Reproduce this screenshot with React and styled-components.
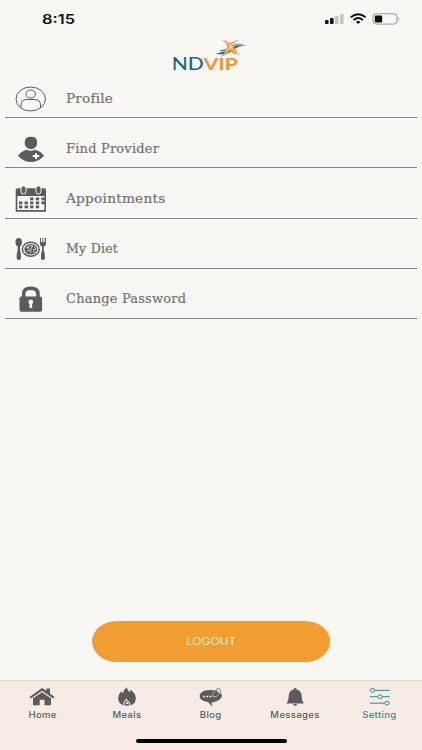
import React from 'react';
import styled, { createGlobalStyle } from 'styled-components';

const GlobalStyle = createGlobalStyle`
  :root {
    --paper: #f9f7f3;
    --blush: #f7ece5;
    --iconGray: #5b5b5b;
    --textGray: #727272;
    --teal: #2c8c94;
    --orange: #f19d31;
  }

  * {
    box-sizing: border-box;
  }

  body {
    margin: 0;
    background: var(--paper);
    font-family: Inter, 'Liberation Sans', sans-serif;
  }
`;

const Screen = styled.div`
  display: flex;
  flex-direction: column;
  height: 750px;
  width: 422px;
  background: var(--paper);
  overflow: hidden;
`;

const StatusBar = styled.div`
  display: flex;
  justify-content: space-between;
  align-items: center;
  height: 38px;
  padding: 0 21px 0 42px;
`;

const Time = styled.span`
  font-size: 13px;
  font-weight: 600;
  line-height: 16px;
  color: #111;
  transform: scaleX(1.26);
  transform-origin: left;
`;

const Header = styled.header`
  display: flex;
  justify-content: center;
  height: 42px;
`;

const Menu = styled.ul`
  flex: 1;
  list-style: none;
  margin: 0;
  padding: 0 5px;
`;

const MenuItem = styled.li`
  display: flex;
  align-items: center;
  height: 50.25px;
  padding: 12px 0 0 10px;
  border-bottom: 1px solid #888;

  &:first-child {
    height: 38px;
    padding-top: 0;
  }
`;

const MenuIcon = styled.svg`
  width: 32px;
  height: 28px;
  margin-right: 19px;
  color: var(--iconGray);
`;

const MenuLabel = styled.span`
  font-family: 'DejaVu Serif', serif;
  font-size: 12px;
  line-height: 16px;
  letter-spacing: 0.2px;
  color: var(--textGray);
  -webkit-text-stroke: 0.2px var(--textGray);
  transform: scaleX(${(props) => props.$stretch});
  transform-origin: left;
`;

const LogoutButton = styled.button`
  align-self: center;
  width: 238px;
  height: 41px;
  margin-bottom: 18px;
  border: 0;
  border-radius: 25px / 20.5px;
  background: var(--orange);
  color: #fff3d8;
  font-family: Inter, sans-serif;
  font-size: 10.5px;
  padding: 0;
`;

const ButtonText = styled.span`
  display: inline-block;
  transform: scaleX(1.14);
`;

const Footer = styled.footer`
  height: 70px;
  background: var(--blush);
  border-top: 1px solid #d9d7d5;
`;

const Tabs = styled.nav`
  display: grid;
  grid-template-columns: repeat(5, 1fr);
  height: 58px;
`;

const Tab = styled.div`
  display: flex;
  flex-direction: column;
  align-items: center;
  padding-top: 6px;
  color: ${(props) => (props.$active ? 'var(--teal)' : 'var(--iconGray)')};
`;

const TabIcon = styled.svg`
  width: 26px;
  height: 20px;
`;

const TabLabel = styled.span`
  font-size: 8.5px;
  font-weight: 500;
  line-height: 12px;
  margin-top: 2px;
  letter-spacing: 0.3px;
  transform: scaleX(1.12);
`;

const HomeIndicator = styled.div`
  width: 151px;
  height: 4px;
  margin: 0 auto;
  border-radius: 2px;
  background: #000;
`;

function StatusIcons() {
  return (
    <svg width='77' height='14' viewBox='0 0 77 14'>
      <g fill='#111'>
        <rect x='1' y='8' width='3.6' height='4' rx='1' />
        <rect x='6' y='6' width='3.6' height='6' rx='1' />
        <rect x='11' y='4' width='3.6' height='8' rx='1' opacity='.22' />
        <rect x='16' y='2' width='3.6' height='10' rx='1' opacity='.22' />
        <path d='M31.8 9.8Q34.2 8 36.6 9.8L34.2 12Z' />
      </g>
      <g fill='none' stroke='#111' strokeWidth='1.9'>
        <path d='M26.8 5.2Q34.2-.9 41.6 5.2' />
        <path d='M29.5 7.9Q34.2 4 38.9 7.9' />
      </g>
      <rect x='49' y='1.8' width='24' height='10.3' rx='3' fill='none' stroke='#999' />
      <rect x='50.8' y='3.5' width='7.4' height='6.9' rx='1.2' fill='#111' />
      <path d='M74.5 5Q76.4 7 74.5 9Z' fill='#999' />
    </svg>
  );
}

function Logo() {
  return (
    <svg width='86' height='42' viewBox='168 38 86 42'>
      <g fontFamily='Lato, sans-serif' fontSize='17.5'>
        <text x='171.8' y='69.8' fontWeight='500' fill='#196a80' textLength='32' lengthAdjust='spacingAndGlyphs'>ND</text>
        <text x='203.4' y='69.8' fontWeight='700' fill='#ee9634' textLength='34.5' lengthAdjust='spacingAndGlyphs'>VIP</text>
      </g>
      <g fill='#196a80'>
        <path d='M216 53.8Q222 52.5 226 49Q234 42.5 247 45.2Q239 45.5 234 49.5Q226 56 216 53.8Z' />
        <path d='M219 50.5Q227 50 231 46.5Q236 42.5 244 44.5Q237 45 232 49Q226 53 219 50.5Z' />
      </g>
      <g fill='#ee9634'>
        <path d='M222 40Q232 42 234.5 48Q236.5 53 241 54.5Q232 55 228.8 49.2Q227 44 222 40Z' />
        <path d='M239.5 39.7Q232.5 43 231.5 48.5Q229 54 220.5 57Q225 52.5 226.8 48Q230 41 239.5 39.7Z' />
      </g>
      <g fill='none' stroke='#f9f7f3' strokeWidth='.8'>
        <path d='M218 52.3Q226 51.8 231.5 47.3Q237 43.6 245 45.3' />
        <path d='M225 42Q231 44.5 232.3 49Q234 53 239 54.2' />
        <path d='M236 41.7Q230 44.5 229 49' />
      </g>
    </svg>
  );
}

function ProfileIcon() {
  return (
    <MenuIcon viewBox='0 0 32 28' fill='none' stroke='currentColor' strokeWidth='1'>
      <ellipse cx='15.7' cy='14' rx='14.7' ry='12' />
      <ellipse cx='15.7' cy='9' rx='4.7' ry='4' />
      <path d='M6 22.8V20Q6 14.5 12 14.5H19.5Q25.5 14.5 25.5 20V22.8' />
    </MenuIcon>
  );
}

function ProviderIcon() {
  return (
    <MenuIcon viewBox='0 0 32 28' fill='currentColor'>
      <path d='M9.8 7Q9.8 1.8 16 1.8T22 7V9Q21 14 16 14T9.8 9Z' />
      <path d='M3 21Q6 16 11.5 14.7Q16 17 20 14.7Q26 16 29 21Q23 27 16 27T3 21Z' />
      <path d='M21 18.2V24M17.7 21.1H24.3' stroke='#f9f7f3' strokeWidth='2' />
    </MenuIcon>
  );
}

function CalendarIcon() {
  const dots = [[15.7, 13], [21.4, 13], [27, 13], [4.6, 17], [10.2, 17], [15.7, 17], [21.4, 17], [27, 17], [4.6, 21], [10.2, 21], [15.7, 21], [21.4, 21]];
  return (
    <MenuIcon viewBox='0 0 32 28'>
      <path d='M2.5 3.3H29.5Q31 3.3 31 5V26.7H.7V5Q.7 3.3 2.5 3.3Z' fill='currentColor' />
      <path d='M2.3 11H29.4V25H2.3Z' fill='#f9f7f3' />
      <g fill='currentColor' stroke='#f9f7f3'>
        <rect x='6' y='.9' width='5' height='8' rx='2.2' />
        <rect x='21' y='.9' width='5' height='8' rx='2.2' />
      </g>
      {dots.map(([x, y]) => (
        <rect key={`${x}-${y}`} x={x - 0.6} y={y - 0.5} width='3.3' height='2.8' fill='currentColor' />
      ))}
    </MenuIcon>
  );
}

function DietIcon() {
  return (
    <MenuIcon viewBox='0 0 32 28' fill='currentColor'>
      <ellipse cx='3.7' cy='7.3' rx='3.2' ry='4.2' />
      <path d='M2.9 10H4.8L5.2 16Q6.2 18 5.8 24Q3.8 26 1.8 24Q1.4 18 2.5 16Z' />
      <path d='M25 3H26V7.2H27.4V3H28.4V7.2H29.8V3H31V9Q30.8 11 28.8 11.5V15.5Q30.2 18 29.8 24Q27.9 26 26 24Q25.8 18 27 15.5V11.5Q25 11 25 9Z' />
      <ellipse cx='15.8' cy='14.2' rx='8.4' ry='7' fill='none' stroke='currentColor' strokeWidth='1.5' />
      <ellipse cx='15.8' cy='14.2' rx='6.4' ry='5.2' />
      <path d='M11 13L14 11L13 14M15 10.5L18 11L16 13M19 12L21 14L18 15M12 16L15 15L16 18M18 17H20M15 13L17 15' fill='none' stroke='#f9f7f3' strokeWidth='.8' />
    </MenuIcon>
  );
}

function LockIcon() {
  return (
    <MenuIcon viewBox='0 0 32 28'>
      <path d='M8.7 13V9Q8.7 3.3 15.8 3.3T23 9V13' fill='none' stroke='currentColor' strokeWidth='3.5' />
      <rect x='4.5' y='11.5' width='22.6' height='15.2' rx='1.8' fill='currentColor' />
      <circle cx='15.8' cy='17' r='2.4' fill='#f9f7f3' />
      <path d='M14.8 17H16.9L17.3 23H14.4Z' fill='#f9f7f3' />
    </MenuIcon>
  );
}

function HomeIcon() {
  return (
    <TabIcon viewBox='0 0 26 20' fill='currentColor'>
      <path d='M13 1L17.3 3.8V1.5H21V6.4L25.5 10L24.2 11.5L13 3.8L1.8 11.5L.5 10Z' />
      <path d='M13 5.2L22 11.2V18.2H15.5V12.8H10.7V18.2H4V11.2Z' />
    </TabIcon>
  );
}

function MealsIcon() {
  return (
    <TabIcon viewBox='0 0 26 20'>
      <path d='M12.8.5Q13.7 3.5 15.7 5.3Q16.5 4 16.4 2.8Q21.7 6 21.8 11.5Q21.6 18.7 13 18.8Q4.5 18.5 4.2 11.8Q4.2 6.8 7.6 4.2Q8 5.7 9 6Q9.5 2.5 12.8.5Z' fill='currentColor' />
      <path d='M10.2 18.4Q9 15.4 12.3 12.4L13 13.5Q16.6 16 15.6 18.4' fill='none' stroke='#f7ece5' strokeWidth='1.1' />
      <circle cx='12.9' cy='16.2' r='1.1' fill='#f7ece5' />
    </TabIcon>
  );
}

function BlogIcon() {
  return (
    <TabIcon viewBox='0 0 26 20'>
      <path d='M12 3C4.8 3 1.6 6 1.6 9.2Q1.8 13.3 8.8 14.8Q11.2 15.4 12.2 17.5Q12.9 18.8 15 18.8Q12.8 17.1 13.8 15.4Q23.5 14 24 8.3L21 3.6Z' fill='currentColor' />
      <path d='M14.2 9.8L15 6.5L18.6 1.7Q19.8 .8 21.3 1.6L22.6 2.8Q23.4 4.4 22.4 5.6L18.3 9.6Z' fill='currentColor' stroke='#f7ece5' strokeWidth='.6' />
      <path d='M18 3.4L19.5 1.6Q23 1.4 22.6 5.2L21.4 6.4Z' fill='#f7ece5' stroke='currentColor' strokeWidth='.6' />
      <path d='M5.2 9.5H7M8.3 9.5H10M11.2 9.5H13' stroke='#f7ece5' strokeWidth='1.6' />
    </TabIcon>
  );
}

function BellIcon() {
  return (
    <TabIcon viewBox='0 0 26 20' fill='currentColor'>
      <path d='M11.7 2.5V1.6Q13.1.6 14.5 1.6V2.5Q19.6 3.7 19.6 8.8Q19.8 14.2 21.8 16.4H4.4Q6.6 14.2 6.7 8.8Q6.8 3.7 11.7 2.5Z' />
      <path d='M11 17.1H15.2Q14.8 18.7 13.1 18.7T11 17.1Z' />
    </TabIcon>
  );
}

function SettingIcon() {
  return (
    <TabIcon viewBox='0 0 26 20' fill='none' stroke='currentColor' strokeWidth='1'>
      <path d='M7.8 3.3H23M3 9.7H10.3M15.2 9.7H23M3 16.2H17.7' />
      <ellipse cx='5.5' cy='3.3' rx='2.2' ry='1.8' />
      <ellipse cx='12.8' cy='9.7' rx='2.2' ry='1.8' />
      <ellipse cx='20' cy='16.2' rx='2.2' ry='1.8' />
    </TabIcon>
  );
}

const menuItems = [
  { label: 'Profile', Icon: ProfileIcon, stretch: 1.13 },
  { label: 'Find Provider', Icon: ProviderIcon, stretch: 1.08 },
  { label: 'Appointments', Icon: CalendarIcon, stretch: 1.14 },
  { label: 'My Diet', Icon: DietIcon, stretch: 1.05 },
  { label: 'Change Password', Icon: LockIcon, stretch: 1.08 },
];

const tabs = [
  { label: 'Home', Icon: HomeIcon },
  { label: 'Meals', Icon: MealsIcon },
  { label: 'Blog', Icon: BlogIcon },
  { label: 'Messages', Icon: BellIcon },
  { label: 'Setting', Icon: SettingIcon, active: true },
];

function App() {
  return (
    <Screen>
      <GlobalStyle />
      <StatusBar>
        <Time>8:15</Time>
        <StatusIcons />
      </StatusBar>
      <Header>
        <Logo />
      </Header>
      <Menu>
        {menuItems.map(({ label, Icon, stretch }) => (
          <MenuItem key={label}>
            <Icon />
            <MenuLabel $stretch={stretch}>{label}</MenuLabel>
          </MenuItem>
        ))}
      </Menu>
      <LogoutButton>
        <ButtonText>LOGOUT</ButtonText>
      </LogoutButton>
      <Footer>
        <Tabs>
          {tabs.map(({ label, Icon, active }) => (
            <Tab key={label} $active={active}>
              <Icon />
              <TabLabel>{label}</TabLabel>
            </Tab>
          ))}
        </Tabs>
        <HomeIndicator />
      </Footer>
    </Screen>
  );
}

export default App;
